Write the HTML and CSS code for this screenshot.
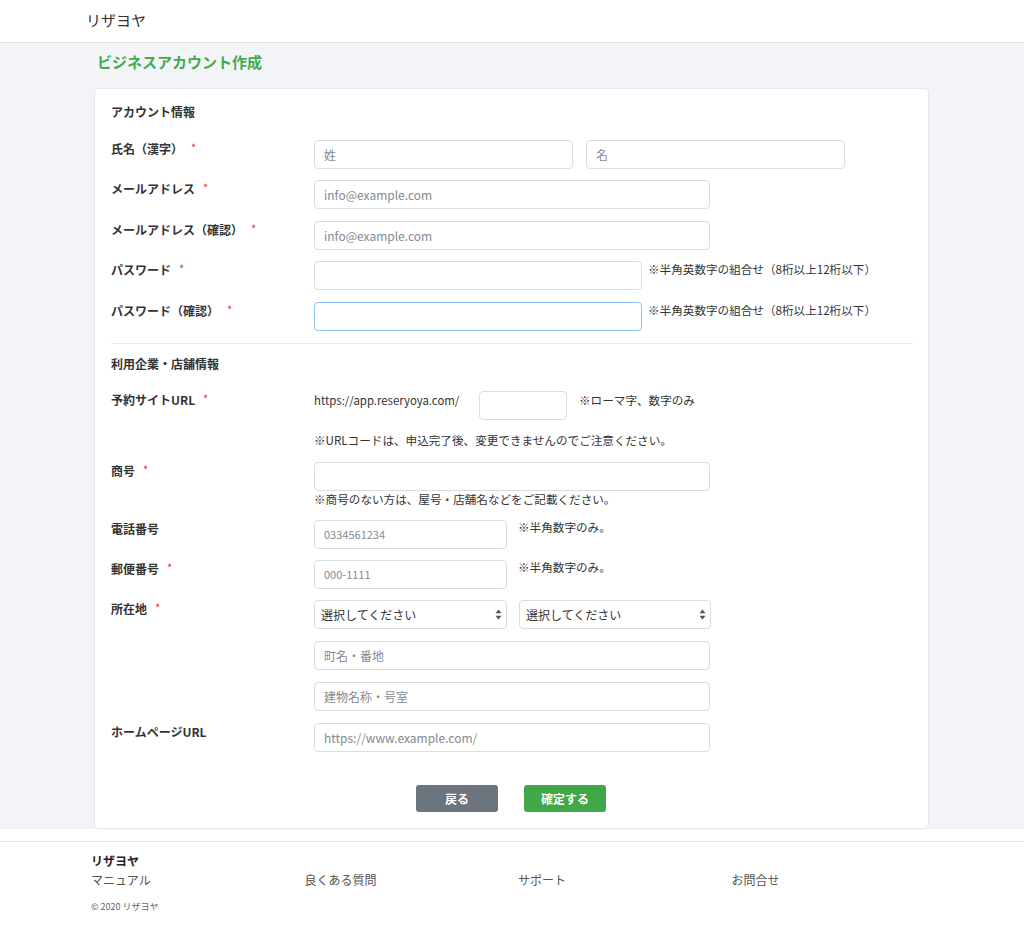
FILE: index.html
```html
<!DOCTYPE html>
<html lang="ja">
<head>
<meta charset="utf-8">
<title>ビジネスアカウント作成</title>
<link rel="stylesheet" href="styles.css">
</head>
<body>
<header class="site-header">
  <div class="brand">リザヨヤ</div>
</header>
<main class="main">
  <h1 class="page-title">ビジネスアカウント作成</h1>
  <div class="card">
    <h2 class="section-title">アカウント情報</h2>
    <div class="row">
      <div class="label">氏名（漢字）<span class="req">*</span></div>
      <div class="field inline">
        <input class="input w-name" placeholder="姓">
        <input class="input w-name gap13" placeholder="名">
      </div>
    </div>
    <div class="row">
      <div class="label">メールアドレス<span class="req">*</span></div>
      <div class="field"><input class="input w-full" placeholder="info@example.com"></div>
    </div>
    <div class="row">
      <div class="label">メールアドレス（確認）<span class="req">*</span></div>
      <div class="field"><input class="input w-full" placeholder="info@example.com"></div>
    </div>
    <div class="row">
      <div class="label">パスワード<span class="req">*</span></div>
      <div class="field inline">
        <input class="input w-pw" type="password">
        <span class="hint hint-pw">※半角英数字の組合せ（8桁以上12桁以下）</span>
      </div>
    </div>
    <div class="row">
      <div class="label">パスワード（確認）<span class="req">*</span></div>
      <div class="field inline">
        <input class="input w-pw focus" type="password">
        <span class="hint hint-pw">※半角英数字の組合せ（8桁以上12桁以下）</span>
      </div>
    </div>

    <hr class="divider">

    <h2 class="section-title s2">利用企業・店舗情報</h2>
    <div class="row r-url">
      <div class="label">予約サイトURL<span class="req">*</span></div>
      <div class="field">
        <div class="inline">
          <span class="prefix">https://app.reseryoya.com/</span>
          <input class="input w-code">
          <span class="hint hint-code">※ローマ字、数字のみ</span>
        </div>
        <div class="note">※URLコードは、申込完了後、変更できませんのでご注意ください。</div>
      </div>
    </div>
    <div class="row r-shop">
      <div class="label">商号<span class="req">*</span></div>
      <div class="field">
        <input class="input w-full">
        <div class="sub-note">※商号のない方は、屋号・店舗名などをご記載ください。</div>
      </div>
    </div>
    <div class="row r-tel">
      <div class="label">電話番号</div>
      <div class="field inline">
        <input class="input w-half small" placeholder="0334561234">
        <span class="hint hint-num">※半角数字のみ。</span>
      </div>
    </div>
    <div class="row">
      <div class="label">郵便番号<span class="req">*</span></div>
      <div class="field inline">
        <input class="input w-half small" placeholder="000-1111">
        <span class="hint hint-num">※半角数字のみ。</span>
      </div>
    </div>
    <div class="row">
      <div class="label">所在地<span class="req">*</span></div>
      <div class="field">
        <div class="inline">
          <div class="select-wrap w-half">
            <select class="select"><option>選択してください</option></select>
            <svg class="caret" width="7" height="11" viewBox="0 0 7 11"><path d="M3.5 0.5 L6.5 4.3 H0.5 Z M3.5 10.5 L0.5 6.7 H6.5 Z" fill="#555"/></svg>
          </div>
          <div class="select-wrap w-half2 gap12">
            <select class="select"><option>選択してください</option></select>
            <svg class="caret" width="7" height="11" viewBox="0 0 7 11"><path d="M3.5 0.5 L6.5 4.3 H0.5 Z M3.5 10.5 L0.5 6.7 H6.5 Z" fill="#555"/></svg>
          </div>
        </div>
        <input class="input w-full stack" placeholder="町名・番地">
        <input class="input w-full stack" placeholder="建物名称・号室">
      </div>
    </div>
    <div class="row">
      <div class="label">ホームページURL</div>
      <div class="field"><input class="input w-full" placeholder="https://www.example.com/"></div>
    </div>

    <div class="actions">
      <button class="btn btn-back">戻る</button>
      <button class="btn btn-ok">確定する</button>
    </div>
  </div>
</main>
<footer class="site-footer">
  <div class="footer-brand">リザヨヤ</div>
  <nav class="footer-links">
    <a class="flink">マニュアル</a>
    <a class="flink">良くある質問</a>
    <a class="flink">サポート</a>
    <a class="flink">お問合せ</a>
  </nav>
  <div class="copy">© 2020 リザヨヤ</div>
</footer>
</body>
</html>
```

FILE: styles.css
```css
* { box-sizing: border-box; }
html, body { margin: 0; padding: 0; }
body {
  font-family: "Noto Sans CJK JP", "Noto Sans", sans-serif;
  color: #333;
  background: #fff;
  font-size: 12px;
}
.site-header {
  height: 43px;
  border-bottom: 1px solid #e2e3e6;
  padding-left: 86px;
  display: flex;
  align-items: center;
}
.brand {
  font-size: 15px;
  color: #333;
  line-height: 20px;
  margin-top: -3px;
}
.main {
  background: #f3f4f8;
  padding: 9px 0 0 95px;
  height: 786px;
}
.page-title {
  margin: 0 0 17px 2px;
  font-size: 15px;
  line-height: 20px;
  font-weight: 700;
  color: #40ab4c;
}
.card {
  width: 833px;
  background: #fff;
  border-radius: 4px;
  box-shadow: 0 0 0 1px #e6e7ea, 0 1px 2px rgba(0,0,0,0.08);
  padding: 14px 15px 16px 16px;
}
.section-title {
  margin: 0 0 19px;
  font-size: 12px;
  line-height: 18px;
  font-weight: 700;
  color: #333;
}
.section-title.s2 { margin-bottom: 18px; }
.row {
  display: flex;
  margin-bottom: 11.4px;
}
.label {
  width: 203px;
  flex: none;
  font-size: 12px;
  line-height: 18px;
  font-weight: 700;
  color: #333;
}
.req {
  color: #e3342f;
  font-size: 11px;
  font-weight: 400;
  margin-left: 8px;
  position: relative;
  top: -2px;
}
.field { display: block; }
.inline { display: flex; align-items: flex-start; }
.input {
  display: block;
  height: 29px;
  border: 1px solid #d9dce0;
  border-radius: 4px;
  padding: 0 9px;
  font-family: "Noto Sans CJK JP", "Noto Sans", sans-serif;
  font-size: 12px;
  color: #495057;
  background: #fff;
  outline: none;
}
.input::placeholder { color: #858a90; }
.input.small { font-size: 11px; }
.input.focus { border-color: #8cc2f8; }
.w-name { width: 259px; }
.gap13 { margin-left: 13px; }
.w-full { width: 396px; }
.w-pw { width: 328px; }
.w-half { width: 193px; }
.w-half2 { width: 192px; }
.gap12 { margin-left: 12px; }
.w-code { width: 88px; }
.hint {
  font-size: 11.6px;
  line-height: 18px;
  color: #333;
}
.hint-pw { margin-left: 6px; margin-top: -1px; }
.hint-num { margin-left: 11px; margin-top: -2px; }
.hint-code { margin-left: 12px; }
.prefix {
  width: 165px;
  flex: none;
  font-size: 11.4px;
  line-height: 18px;
  color: #333;
}
.divider {
  border: 0;
  border-top: 1px solid #e9ebee;
  margin: 12px 0 11px;
}
.r-url { margin-bottom: 13px; }
.note {
  margin-top: 11px;
  font-size: 11.6px;
  line-height: 18px;
  color: #333;
}
.r-shop { margin-bottom: 13px; }
.sub-note {
  font-size: 11.6px;
  line-height: 16px;
  color: #333;
}
.select-wrap { position: relative; height: 29px; }
.select {
  appearance: none;
  -webkit-appearance: none;
  width: 100%;
  height: 29px;
  border: 1px solid #d9dce0;
  border-radius: 4px;
  background: #fff;
  padding: 0 20px 0 6px;
  font-family: "Noto Sans CJK JP", "Noto Sans", sans-serif;
  font-size: 12px;
  color: #333;
  outline: none;
}
.caret {
  position: absolute;
  right: 5px;
  top: 9px;
  pointer-events: none;
}
.stack { margin-top: 12px; }
.actions {
  display: flex;
  justify-content: center;
  gap: 26px;
  margin-top: 33px;
  padding-right: 2px;
}
.btn {
  width: 82px;
  height: 27px;
  border: 0;
  border-radius: 3px;
  color: #fff;
  font-family: "Noto Sans CJK JP", "Noto Sans", sans-serif;
  font-size: 12px;
  font-weight: 700;
}
.btn-back { background: #6c747e; }
.btn-ok { background: #41a849; }
.site-footer {
  margin-top: 12px;
  border-top: 1px solid #e4e5e8;
  padding: 10px 0 0 91px;
  height: 90px;
}
.footer-brand {
  font-size: 12px;
  line-height: 18px;
  font-weight: 700;
  color: #222;
}
.footer-links {
  display: flex;
  margin-top: 1px;
}
.flink {
  width: 213.5px;
  font-size: 12px;
  line-height: 18px;
  color: #555;
}
.copy {
  margin-top: 11px;
  font-size: 9px;
  line-height: 14px;
  color: #666;
}
```
